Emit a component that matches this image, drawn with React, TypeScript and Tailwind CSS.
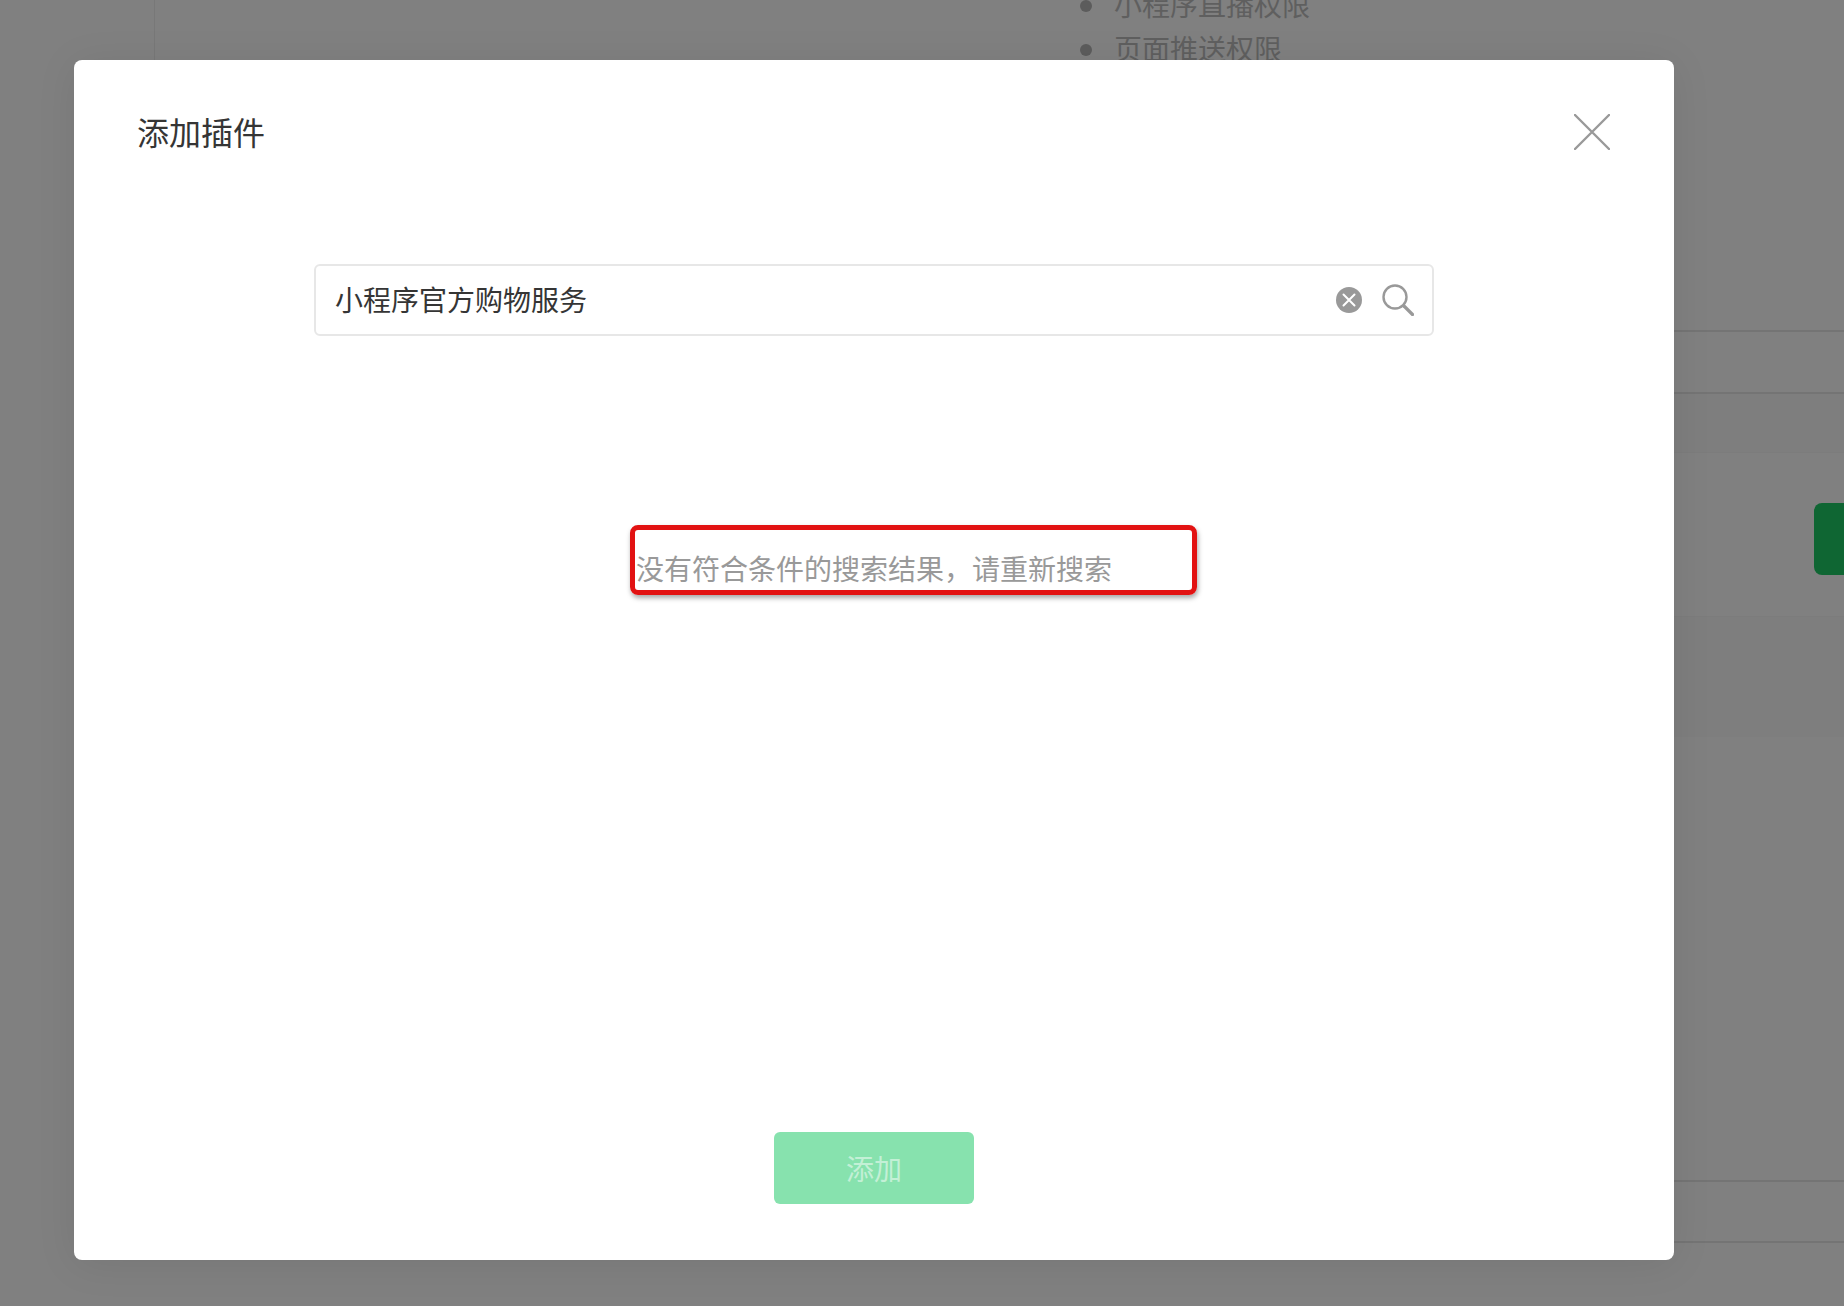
const cjk = "font-['Noto_Sans_CJK_SC','Noto_Sans',sans-serif]";

function CloseIcon() {
  return (
    <svg width="36" height="36" viewBox="0 0 36 36" fill="none" stroke="#999" strokeWidth="2.4" strokeLinecap="round">
      <path d="M1 1 35 35M35 1 1 35" />
    </svg>
  );
}

function ClearIcon() {
  return (
    <svg width="26" height="26" viewBox="0 0 26 26" fill="none">
      <circle cx="13" cy="13" r="13" fill="#999" />
      <path d="M7.5 7.5 18.5 18.5M18.5 7.5 7.5 18.5" stroke="#fff" strokeWidth="2" strokeLinecap="round" />
    </svg>
  );
}

function SearchIcon() {
  return (
    <svg width="32" height="32" viewBox="0 0 32 32" fill="none" stroke="#999" strokeLinecap="round">
      <circle cx="13" cy="13" r="11.5" strokeWidth="2.4" />
      <path d="M22 22 30.5 30.5" strokeWidth="3.2" />
    </svg>
  );
}

function BackgroundPage() {
  return (
    <div className="flex h-[1306px] overflow-hidden bg-[#808080]">
      <div className="w-[155px] shrink-0">
        <div className="h-[200px] border-r border-[#787878]" />
      </div>
      <div className="flex min-w-0 flex-1 flex-col">
        <section className="h-[332px] shrink-0 border-b-2 border-[#747474]">
          <ul className="-mt-[18px] ml-[925px] text-[28px] text-[#5f5f5f]">
            {["小程序直播权限", "页面推送权限"].map((item) => (
              <li key={item} className="flex h-[44px] items-center gap-[22px] whitespace-nowrap">
                <span className="mt-[4px] h-[12px] w-[12px] rounded-full bg-[#5c5c5c]" />
                {item}
              </li>
            ))}
          </ul>
        </section>
        <div className="h-[62px] shrink-0 border-b-2 border-[#747474]" />
        <div className="h-[58px] shrink-0 bg-[#7e7e7e]" />
        <div className="flex h-[165px] shrink-0 justify-end border-y border-[#7c7c7c] pt-[50px]">
          <div className="-mr-[170px] h-[72px] w-[200px] shrink-0 rounded-lg bg-[#0f6633]" />
        </div>
        <div className="h-[120px] shrink-0 bg-[#7e7e7e]" />
        <div className="h-[445px] shrink-0 border-b-2 border-[#747474]" />
        <div className="h-[61px] shrink-0 border-b-2 border-[#747474]" />
        <div className="flex-1" />
      </div>
    </div>
  );
}

export default function App() {
  return (
    <div className={`relative h-[1306px] w-[1844px] overflow-hidden ${cjk}`}>
      <BackgroundPage />
      <div className="absolute inset-0 pl-[74px] pt-[60px]">
        <div className="flex h-[1200px] w-[1600px] flex-col rounded-lg bg-white shadow-[0_4px_40px_rgba(0,0,0,0.08)]">
          <header className="mt-[47px] flex h-[50px] items-center justify-between pl-[63px] pr-[64px]">
            <h2 className="-mt-[2px] text-[32px] leading-[48px] text-[#353535]">添加插件</h2>
            <button type="button" aria-label="关闭">
              <CloseIcon />
            </button>
          </header>
          <div className="mx-auto mt-[107px] flex h-[72px] w-[1120px] items-center rounded-md border-2 border-[#e7e7e7] pl-[19px] pr-[18px]">
            <span className="-mt-[2px] flex-1 text-[28px] text-[#353535]">小程序官方购物服务</span>
            <ClearIcon />
            <span className="ml-[20px]">
              <SearchIcon />
            </span>
          </div>
          <div className="relative mx-auto mt-[212px] w-fit">
            <p className="text-[28px] leading-[40px] text-[#999]">{"没有符合条件的搜索结果\uFF0C请重新搜索"}</p>
            <div className="absolute -bottom-[7px] -left-[6px] -right-[85px] -top-[23px] rounded-lg border-[5px] border-[#e21212] shadow-[1px_3px_5px_rgba(0,0,0,0.35)]" />
          </div>
          <button
            type="button"
            className="mx-auto mb-[56px] mt-auto h-[72px] w-[200px] rounded-md bg-[#87e2ae] text-[28px] text-[#c3f0d6]"
          >
            添加
          </button>
        </div>
      </div>
    </div>
  );
}
